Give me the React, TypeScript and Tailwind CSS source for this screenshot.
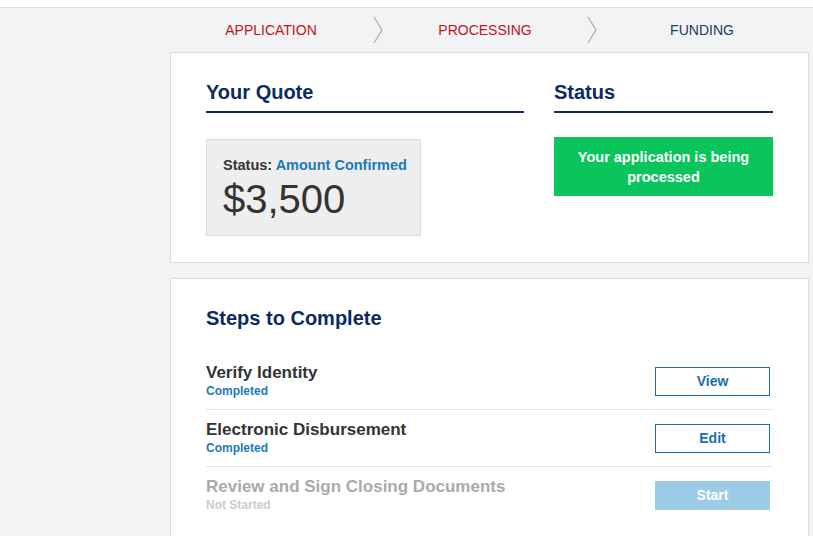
import React from "react";

const Chevron = () => (
  <div className="w-[12px] h-[44px] flex items-center justify-center shrink-0">
    <svg width="12" height="28" viewBox="0 0 12 28">
      <polyline points="2,1 10,14 2,27" fill="none" stroke="#a8a8a8" strokeWidth="1.2" />
    </svg>
  </div>
);

type Step = { title: string; status: string; action: string; state: "done" | "todo" };

const steps: Step[] = [
  { title: "Verify Identity", status: "Completed", action: "View", state: "done" },
  { title: "Electronic Disbursement", status: "Completed", action: "Edit", state: "done" },
  { title: "Review and Sign Closing Documents", status: "Not Started", action: "Start", state: "todo" },
];

export default function App() {
  return (
    <div className="min-h-[536px] bg-[#f2f3f4] font-['Liberation_Sans',Arial,sans-serif]">
      <div className="h-[8px] bg-white border-b border-[#dedede]" />
      <div className="flex">
        <div className="w-[170px] shrink-0" />
        <div className="flex-1 mr-[4px] min-w-0">
          <nav className="flex h-[44px] items-center text-[14px]">
            <div className="w-[202px] text-center text-[#c0141c]">APPLICATION</div>
            <Chevron />
            <div className="w-[202px] text-center text-[#c0141c]">PROCESSING</div>
            <Chevron />
            <div className="w-[208px] text-center text-[#253a62]">FUNDING</div>
          </nav>

          <section className="bg-white border border-[#dcdcdc] px-[35px] pt-[27px] pb-[26px] flex gap-[30px]">
            <div className="w-[318px] shrink-0">
              <h2 className="text-[20px] leading-[24px] font-bold text-[#0b2b5e]">Your Quote</h2>
              <div className="mt-[7px] h-[2px] bg-[#0b2b5e]" />
              <div className="mt-[26px] w-[215px] bg-[#eeeeee] border border-[#dddddd] pl-[16px] pt-[17px] pb-[14px]">
                <div className="text-[14.5px] leading-[17px] font-bold text-[#333333] whitespace-nowrap">
                  Status: <span className="text-[#1a7bb9]">Amount Confirmed</span>
                </div>
                <div className="text-[40px] leading-[44px] text-[#333333] mt-[3px]">$3,500</div>
              </div>
            </div>
            <div className="flex-1">
              <h2 className="text-[20px] leading-[24px] font-bold text-[#0b2b5e]">Status</h2>
              <div className="mt-[7px] h-[2px] bg-[#0b2b5e]" />
              <div className="mt-[24px] h-[59px] bg-[#09c55b] flex items-center justify-center text-center text-white font-bold text-[14.5px] leading-[20px] px-[16px]">
                Your application is being processed
              </div>
            </div>
          </section>

          <section className="mt-[15px] bg-white border border-[#dcdcdc] px-[35px] pt-[27px] pb-[30px]">
            <h2 className="text-[20px] leading-[24px] font-bold text-[#0b2b5e]">Steps to Complete</h2>
            <div className="mt-[23px]">
              {steps.map((s, i) => (
                <div
                  key={s.title}
                  className={`flex items-center justify-between pt-[10px] pb-[10px] ${i > 0 ? "border-t border-[#e2e2e2]" : ""}`}
                >
                  <div>
                    <div
                      className={`text-[17px] leading-[19px] font-bold ${s.state === "done" ? "text-[#333333]" : "text-[#aaaaaa]"}`}
                    >
                      {s.title}
                    </div>
                    <div
                      className={`mt-[1px] text-[12px] leading-[16px] font-bold ${s.state === "done" ? "text-[#1a7bb9]" : "text-[#cccccc]"}`}
                    >
                      {s.status}
                    </div>
                  </div>
                  {s.state === "done" ? (
                    <button className="mr-[3px] w-[115px] h-[29px] border border-[#1a6fa8] bg-white text-[#1a6fa8] text-[14px] font-bold">
                      {s.action}
                    </button>
                  ) : (
                    <button className="mr-[3px] w-[115px] h-[29px] bg-[#9ccbe5] text-white text-[14px] font-bold">
                      {s.action}
                    </button>
                  )}
                </div>
              ))}
            </div>
          </section>
        </div>
      </div>
    </div>
  );
}
